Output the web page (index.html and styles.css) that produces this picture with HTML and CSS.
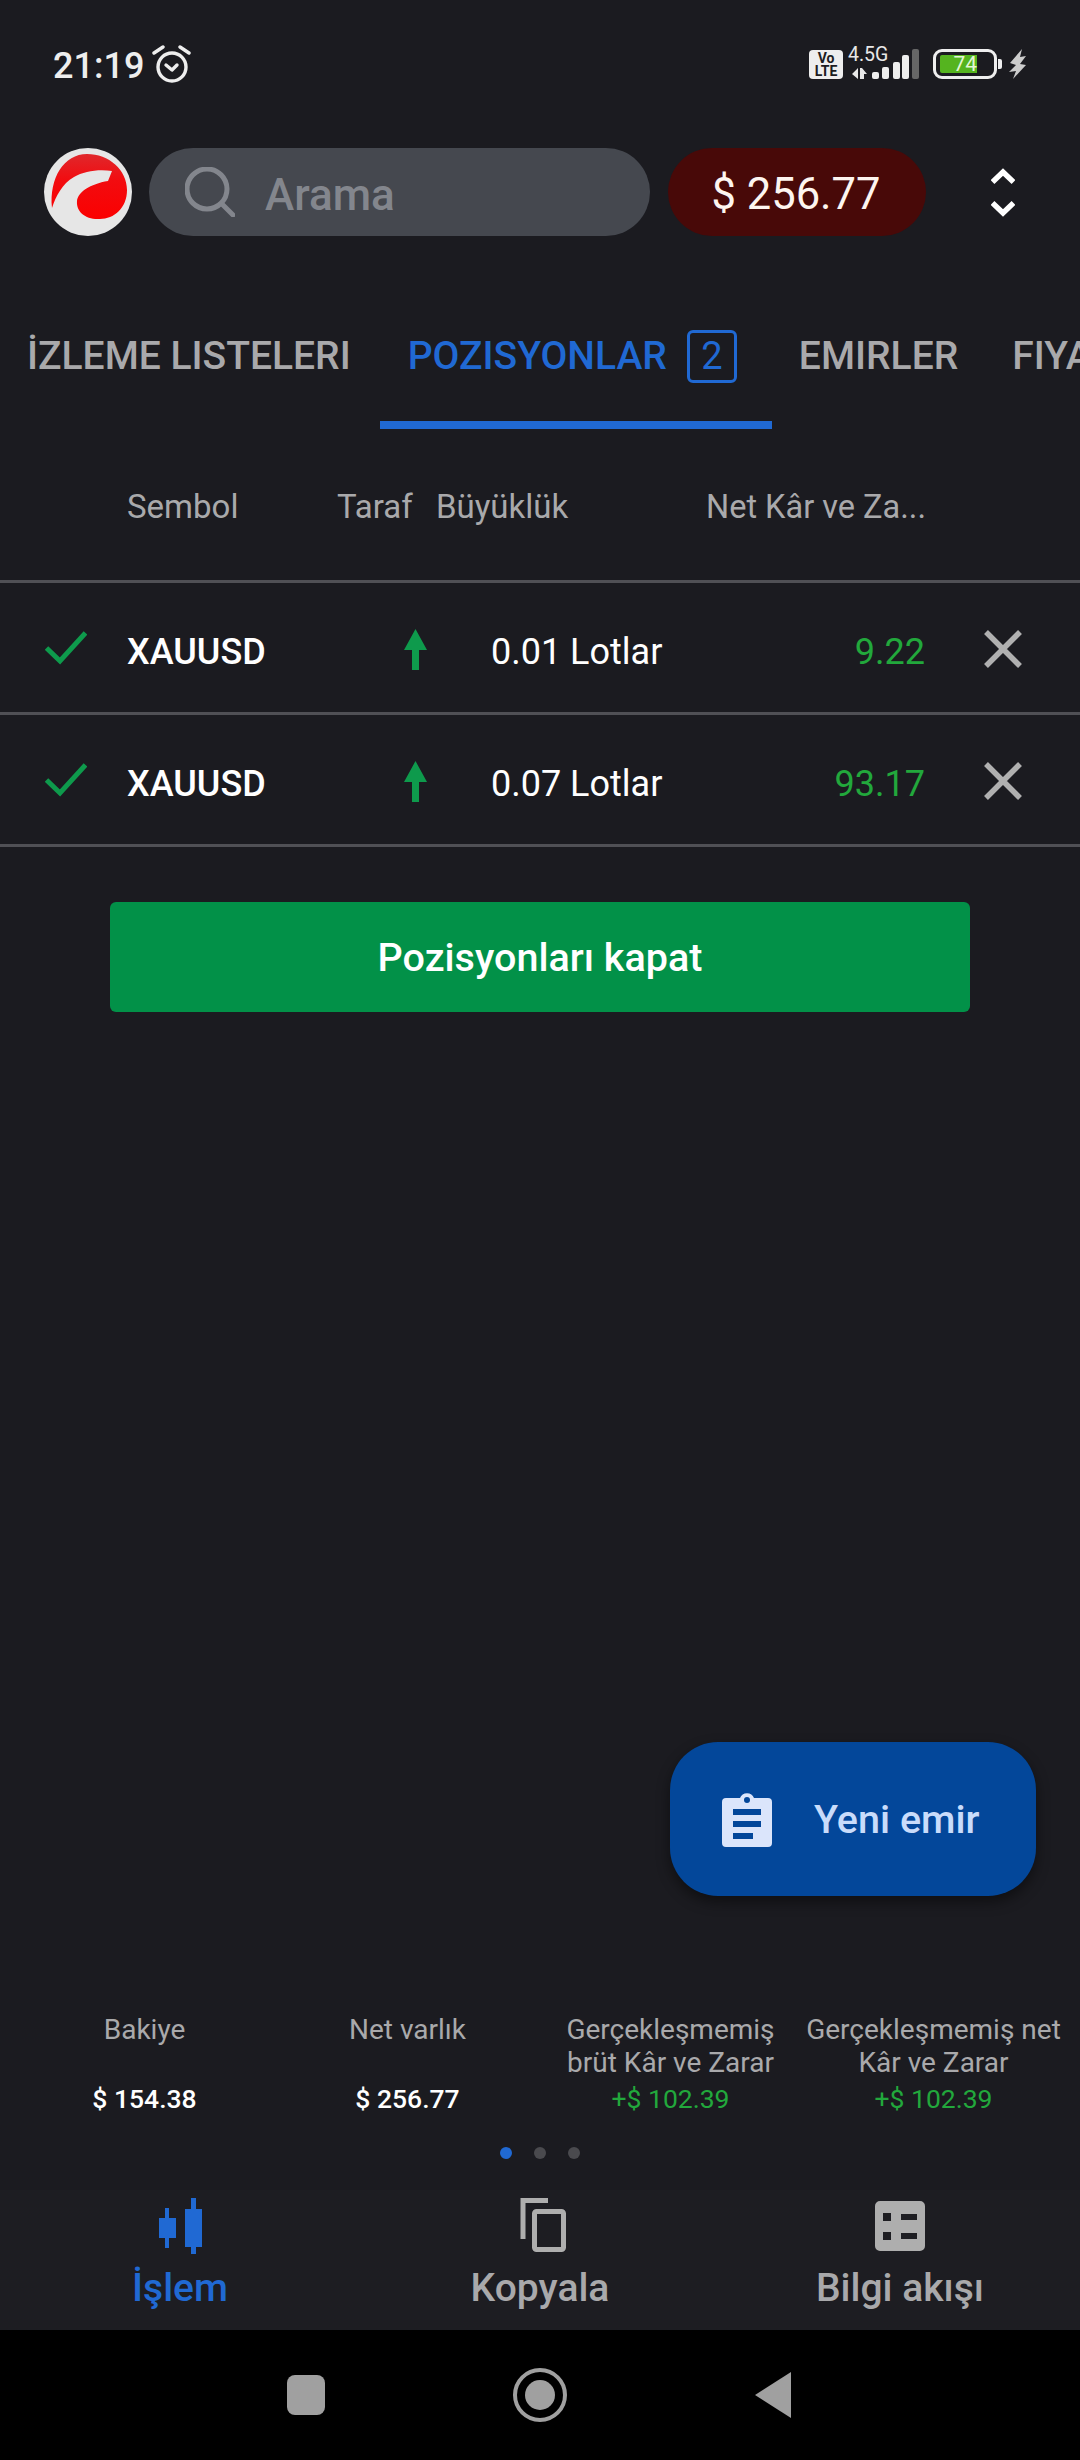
FILE: index.html
```html
<!DOCTYPE html>
<html lang="tr">
<head>
  <meta charset="UTF-8" />
  <meta name="viewport" content="width=device-width, initial-scale=1.0">
  <title>Pozisyonlar</title>
  <link rel="stylesheet" href="styles.css">
</head>
<body>
  <div class="app">

    <!-- Status bar -->
    <div class="status-bar">
      <div class="status-left">
        <span class="clock">21:19</span>
        <svg class="alarm" viewBox="0 0 39 38" width="39" height="38" fill="none" stroke="#eee" stroke-width="3.4" stroke-linecap="round" stroke-linejoin="round">
          <circle cx="20" cy="22" r="14"/>
          <path d="M14 20l6 5 5-5"/>
          <path d="M2 8l9-6M28 2l9 6"/>
        </svg>
      </div>
      <div class="status-right">
        <div class="volte"><span>Vo</span><span>LTE</span></div>
        <div class="network">
          <span class="net-type">4.5G</span>
          <svg viewBox="0 0 67 30" width="67" height="30">
            <path fill="#e8e8e8" d="M0 25l6-6v11zM8 19h2l5 6h-3v5H8z"/>
            <rect x="20" y="23" width="7" height="7" rx="2" fill="#eee"/>
            <rect x="30" y="18" width="7" height="12" rx="2" fill="#eee"/>
            <rect x="41" y="13" width="7" height="17" rx="2" fill="#eee"/>
            <rect x="50" y="6" width="7" height="24" rx="2" fill="#eee"/>
            <rect x="60" y="0" width="7" height="30" rx="2" fill="#666"/>
          </svg>
        </div>
        <div class="battery">
          <div class="battery-level">74</div>
        </div>
        <div class="battery-cap"></div>
        <svg class="bolt" viewBox="0 0 17 30" width="17" height="30" fill="#ccc"><path d="M13 0L1 14l6 2-7 7 7-1-3 8 13-14-6-1 6-8-6 1z"/></svg>
      </div>
    </div>

    <!-- Search row -->
    <div class="top-bar">
      <svg class="logo" viewBox="0 0 88 88" width="88" height="88">
        <defs>
          <linearGradient id="logoRed" x1="0" y1="0" x2="0" y2="1">
            <stop offset="0" stop-color="#e0282c"/>
            <stop offset="0.4" stop-color="#f20c10"/>
            <stop offset="1" stop-color="#fb0000"/>
          </linearGradient>
        </defs>
        <circle cx="44" cy="44" r="44" fill="#e6e6e6"/>
        <path d="M8 60C5 30 20 6 43 6c22 0 40 16 40 36 0 18-13 29-27 29-14 1-24-7-23-18 1-9 13-17 31-20l4-10C55 21 40 23 30 29 18 36 12 48 8 60z" fill="url(#logoRed)"/>
      </svg>
      <div class="search">
        <svg viewBox="0 0 50 50" width="50" height="50" fill="none" stroke="#83868d" stroke-width="5" stroke-linecap="round"><circle cx="22" cy="22" r="20"/><path d="M37 37l11 11"/></svg>
        <span>Arama</span>
      </div>
      <div class="equity-pill">$ 256.77</div>
      <svg class="sort" viewBox="0 0 24 49" width="24" height="49" fill="none" stroke="#fff" stroke-width="5.5"><path d="M1.5 14L12 4l10.5 10M1.5 35L12 45l10.5-10"/></svg>
    </div>

    <!-- Tabs -->
    <div class="tabs">
      <div class="tab">İZLEME LISTELERI</div>
      <div class="tab active">POZISYONLAR <span class="count">2</span></div>
      <div class="tab">EMIRLER</div>
      <div class="tab">FIYATLAR</div>
    </div>

    <!-- Positions table -->
    <div class="table-head">
      <span class="col-symbol">Sembol</span>
      <span class="col-side">Taraf</span>
      <span class="col-size">Büyüklük</span>
      <span class="col-pnl">Net Kâr ve Za...</span>
    </div>

    <div class="row">
      <svg class="check" viewBox="0 0 42 34" width="42" height="34" fill="none" stroke="#0e9a4c" stroke-width="5"><path d="M1.5 17L15 30 40.5 2"/></svg>
      <span class="symbol">XAUUSD</span>
      <svg class="arrow" viewBox="0 0 23 41" width="23" height="41" fill="#0e9a4c"><path d="M11.5 0L23 21h-8v20H8V21H0z"/></svg>
      <span class="size">0.01 Lotlar</span>
      <span class="pnl">9.22</span>
      <svg class="close" viewBox="0 0 38 38" width="38" height="38" stroke="#b0b0b0" stroke-width="5.5"><path d="M2 2l34 34M36 2L2 36"/></svg>
    </div>
    <div class="row">
      <svg class="check" viewBox="0 0 42 34" width="42" height="34" fill="none" stroke="#0e9a4c" stroke-width="5"><path d="M1.5 17L15 30 40.5 2"/></svg>
      <span class="symbol">XAUUSD</span>
      <svg class="arrow" viewBox="0 0 23 41" width="23" height="41" fill="#0e9a4c"><path d="M11.5 0L23 21h-8v20H8V21H0z"/></svg>
      <span class="size">0.07 Lotlar</span>
      <span class="pnl">93.17</span>
      <svg class="close" viewBox="0 0 38 38" width="38" height="38" stroke="#b0b0b0" stroke-width="5.5"><path d="M2 2l34 34M36 2L2 36"/></svg>
    </div>

    <div class="close-wrap">
      <button class="close-all">Pozisyonları kapat</button>
    </div>

    <div class="spacer"></div>

    <div class="fab-wrap">
      <button class="fab">
        <svg viewBox="0 0 50 55" width="50" height="55"><path fill="#dbe5fb" fill-rule="evenodd" d="M4 6h14a7.5 7.5 0 0 1 14 0h14a4 4 0 0 1 4 4v41a4 4 0 0 1-4 4H4a4 4 0 0 1-4-4V10a4 4 0 0 1 4-4zM25 5a3 3 0 1 0 0 6 3 3 0 0 0 0-6zM11 17v6h28v-6zM11 29v6h28v-6zM11 41v6h20v-6z"/></svg>
        <span>Yeni emir</span>
      </button>
    </div>

    <!-- Account summary -->
    <div class="summary">
      <div class="stat">
        <div class="stat-label">Bakiye</div>
        <div class="stat-value">$ 154.38</div>
      </div>
      <div class="stat">
        <div class="stat-label">Net varlık</div>
        <div class="stat-value">$ 256.77</div>
      </div>
      <div class="stat">
        <div class="stat-label">Gerçekleşmemiş brüt Kâr ve Zarar</div>
        <div class="stat-value up">+$ 102.39</div>
      </div>
      <div class="stat">
        <div class="stat-label">Gerçekleşmemiş net Kâr ve Zarar</div>
        <div class="stat-value up">+$ 102.39</div>
      </div>
    </div>
    <div class="dots">
      <i class="on"></i><i></i><i></i>
    </div>

    <!-- Bottom navigation -->
    <div class="bottom-nav">
      <div class="nav-item active">
        <svg viewBox="0 0 43 56" width="43" height="56" fill="#2069d3"><path d="M6 10h4v10h7v20h-7v10H6V40H0V20h6zM32 0h5v11h6v38h-6v7h-5v-7h-6V11h6z"/></svg>
        <span>İşlem</span>
      </div>
      <div class="nav-item">
        <svg class="copy-icon" viewBox="0 0 46 56" width="46" height="56" fill="none" stroke="#aeaeae" stroke-width="5"><path d="M28 2.5H3V41"/><rect x="14.5" y="13.5" width="29" height="38" rx="2"/></svg>
        <span>Kopyala</span>
      </div>
      <div class="nav-item">
        <svg viewBox="0 -3 50 56" width="50" height="56"><path fill="#aeaeae" fill-rule="evenodd" d="M5 0h40a5 5 0 0 1 5 5v40a5 5 0 0 1-5 5H5a5 5 0 0 1-5-5V5a5 5 0 0 1 5-5zM8 12v8h8v-8zM26 13v6h16v-6zM8 31v8h8v-8zM26 32v6h16v-6z"/></svg>
        <span>Bilgi akışı</span>
      </div>
    </div>

    <!-- System navigation -->
    <div class="sys-nav">
      <div class="sys-square"></div>
      <div class="sys-home"><div></div></div>
      <svg viewBox="0 0 36 46" width="36" height="46" fill="#a0a0a0"><path d="M36 0v46L0 23z"/></svg>
    </div>
  </div>
</body>
</html>
```

FILE: styles.css
```css
:root {
  --bg: #1b1b20;
  --blue: #2069d3;
  --green: #22a83c;
  --muted: #a9a9ab;
  --line: #505055;
}

* {
  box-sizing: border-box;
  margin: 0;
  padding: 0;
}

body {
  background: var(--bg);
  font-family: Roboto, sans-serif;
  color: #fff;
}

.app {
  width: 1080px;
  height: 2460px;
  display: flex;
  flex-direction: column;
  overflow: hidden;
}

/* Status bar */
.status-bar {
  height: 140px;
  padding: 43px 54px 0 53px;
  display: flex;
  justify-content: space-between;
  align-items: flex-start;
}

.status-left {
  display: flex;
  align-items: center;
  gap: 8px;
}

.clock {
  font-size: 36px;
  font-weight: 500;
  line-height: 46px;
  color: #eee;
}

.alarm {
  margin-top: -5px;
}

.status-right {
  display: flex;
  align-items: flex-end;
  height: 31px;
  margin-top: 5px;
}

.volte {
  width: 34px;
  height: 29px;
  border-radius: 4px;
  background: #eee;
  color: #1c1c21;
  font-size: 14px;
  font-weight: 700;
  line-height: 13px;
  display: flex;
  flex-direction: column;
  align-items: center;
  justify-content: center;
}

.network {
  position: relative;
  height: 30px;
  margin-left: 9px;
}

.network svg {
  display: block;
}

.net-type {
  position: absolute;
  left: -4px;
  top: -2px;
  font-size: 19.5px;
  line-height: 16px;
  color: #e8e8e8;
}

.battery {
  width: 64px;
  height: 30px;
  margin-left: 14px;
  border: 3px solid #eee;
  border-radius: 9px;
  padding: 3px 4px;
}

.battery-level {
  width: 37px;
  height: 18px;
  background: #55b41f;
  border-radius: 2px 0 0 2px;
  color: #e4f7d6;
  font-size: 21px;
  line-height: 18px;
  text-align: right;
}

.battery-cap {
  width: 4px;
  height: 10px;
  margin: 0 0 10px 1px;
  background: #eee;
  border-radius: 0 2px 2px 0;
}

.bolt {
  margin-left: 7px;
}

/* Search row */
.top-bar {
  height: 100px;
  padding: 8px 0 0 44px;
  display: flex;
  align-items: flex-start;
}

.logo {
  flex: none;
}

.search {
  width: 501px;
  height: 88px;
  margin-left: 17px;
  padding-left: 36px;
  border-radius: 44px;
  background: #45484f;
  display: flex;
  align-items: center;
  gap: 30px;
  color: #83868d;
  font-size: 44px;
  font-weight: 500;
}

.search span {
  margin-top: 6px;
}

.equity-pill {
  width: 258px;
  height: 88px;
  margin-left: 18px;
  padding: 6px 2px 0 0;
  border-radius: 44px;
  background: #480908;
  font-size: 43.5px;
  line-height: 82px;
  text-align: center;
  color: #fdf5f0;
}

.sort {
  margin: 20px 0 0 65px;
}

/* Tabs */
.tabs {
  height: 190px;
  padding: 90px 0 0 27px;
  display: flex;
  align-items: flex-start;
  gap: 57px;
  font-size: 39px;
  font-weight: 500;
  color: var(--muted);
  white-space: nowrap;
}

.tab {
  height: 53px;
  line-height: 53px;
}

.tab:last-child {
  margin-left: -3px;
}

.tab.active {
  color: var(--blue);
  position: relative;
  display: flex;
  align-items: center;
  gap: 20px;
  margin-right: 5px;
}

.tab.active::after {
  content: "";
  position: absolute;
  left: -28px;
  right: -35px;
  top: 91px;
  height: 8px;
  background: var(--blue);
}

.count {
  width: 50px;
  height: 53px;
  border: 3px solid var(--blue);
  border-radius: 6px;
  font-weight: 400;
  font-size: 38px;
  line-height: 47px;
  text-align: center;
}

/* Positions table */
.table-head {
  height: 153px;
  padding-top: 55px;
  display: flex;
  font-size: 33px;
  line-height: 44px;
  color: var(--muted);
  border-bottom: 3px solid var(--line);
}

.col-symbol { margin-left: 127px; width: 210px; }
.col-side { width: 99px; }
.col-size { width: 270px; }
.col-pnl { font-size: 32.5px; white-space: nowrap; }

.row {
  height: 132px;
  display: flex;
  align-items: center;
  border-bottom: 3px solid var(--line);
}

.row span {
  margin-top: 8px;
  font-size: 36px;
}

.check {
  margin-left: 45px;
}

.symbol {
  margin-left: 40px;
  width: 277px;
  font-weight: 500;
}

.arrow {
  margin-top: 3px;
}

.size {
  margin-left: 64px;
  width: 302px;
}

.pnl {
  width: 132px;
  color: var(--green);
  text-align: right;
}

.close {
  margin: 3px 0 0 59px;
}

.close-wrap {
  padding: 55px 110px 0;
}

.close-all {
  display: block;
  width: 100%;
  height: 110px;
  border: none;
  border-radius: 6px;
  background: #029148;
  color: #fff;
  font-family: inherit;
  font-size: 39.5px;
  font-weight: 500;
}

.spacer {
  flex: 1;
}

.fab-wrap {
  display: flex;
  justify-content: flex-end;
  padding-right: 44px;
  margin-bottom: 117px;
}

.fab {
  width: 366px;
  height: 154px;
  border: none;
  border-radius: 48px;
  background: #03479a;
  box-shadow: 0 6px 14px rgba(0, 0, 0, 0.45);
  display: flex;
  align-items: center;
  padding-left: 52px;
  gap: 42px;
  color: #c9dcfb;
  font-family: inherit;
  font-size: 39.5px;
  font-weight: 500;
}

/* Account summary */
.summary {
  display: flex;
  height: 128px;
  padding-left: 13px;
}

.stat {
  width: 263px;
  display: flex;
  flex-direction: column;
  align-items: center;
  text-align: center;
}

.stat-label {
  height: 66px;
  font-size: 28px;
  line-height: 33px;
  color: var(--muted);
}

.stat-value {
  margin-top: 2px;
  font-size: 26.5px;
  line-height: 36px;
  font-weight: 500;
}

.stat-value.up {
  color: var(--green);
  font-weight: 400;
}

.dots {
  height: 43px;
  margin-top: 6px;
  display: flex;
  justify-content: center;
  gap: 22px;
}

.dots i {
  width: 12px;
  height: 12px;
  border-radius: 50%;
  background: #4a4a4e;
}

.dots i.on {
  background: var(--blue);
}

/* Bottom navigation */
.bottom-nav {
  height: 140px;
  padding-top: 8px;
  display: flex;
  background: #1d1d22;
}

.nav-item {
  flex: 1;
  display: flex;
  flex-direction: column;
  align-items: center;
  font-size: 39px;
  font-weight: 500;
  color: var(--muted);
}

.nav-item span {
  line-height: 50px;
  margin-top: 9px;
}

.nav-item.active {
  color: var(--blue);
}

.copy-icon {
  margin-left: 5px;
}

/* System navigation */
.sys-nav {
  height: 130px;
  padding-right: 3px;
  background: #000;
  display: flex;
  align-items: center;
  justify-content: center;
  gap: 188px;
}

.sys-square {
  width: 38px;
  height: 40px;
  border-radius: 8px;
  background: #a0a0a0;
}

.sys-home {
  width: 54px;
  height: 54px;
  border: 4px solid #a0a0a0;
  border-radius: 50%;
  display: flex;
  align-items: center;
  justify-content: center;
}

.sys-home div {
  width: 30px;
  height: 30px;
  border-radius: 50%;
  background: #a0a0a0;
}
```
